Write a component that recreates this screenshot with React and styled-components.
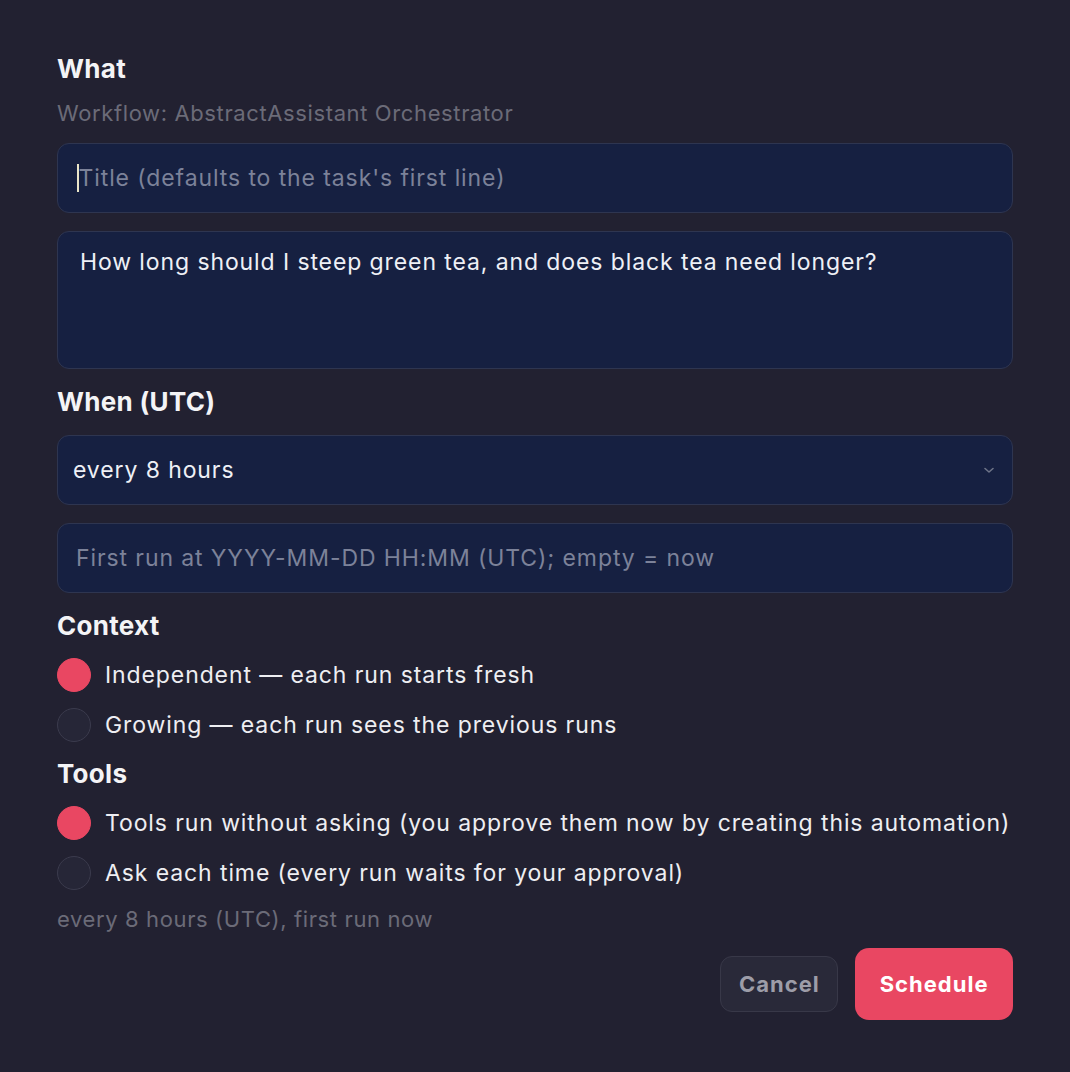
import React from "react";
import styled, { createGlobalStyle } from "styled-components";

const Global = createGlobalStyle`
  html, body { margin: 0; padding: 0; background: #222131; }
  body { font-family: Inter, "Noto Sans", sans-serif; -webkit-font-smoothing: antialiased; }
  * { box-sizing: border-box; }
`;

const Page = styled.div`
  width: 1070px;
  min-height: 1072px;
  background: #222131;
  padding: 52px 57px 0 57px;
  display: flex;
  flex-direction: column;
`;

const Heading = styled.h2`
  margin: ${(p) => p.$mt || 0}px 0 0 0;
  font-size: 26px;
  line-height: 34px;
  font-weight: 700;
  color: #f4f4f6;
  letter-spacing: 0.3px;
`;

const Muted = styled.div`
  margin-top: ${(p) => p.$mt || 0}px;
  font-size: 22px;
  line-height: 28px;
  color: #6b6b78;
  letter-spacing: 0.62px;
`;

const Field = styled.div`
  margin-top: ${(p) => p.$mt || 0}px;
  height: ${(p) => p.$h || 70}px;
  background: #162041;
  border: 1px solid #2e3550;
  border-radius: 12px;
  padding: ${(p) => p.$pad || "0 20px"};
  display: flex;
  align-items: ${(p) => (p.$top ? "flex-start" : "center")};
  font-size: 23px;
  line-height: 30px;
  letter-spacing: 0.9px;
  color: ${(p) => (p.$placeholder ? "#7c8299" : "#eef0f6")};
  position: relative;
`;

const Caret = styled.span`
  display: inline-block;
  width: 1.5px;
  height: 28px;
  background: #e9e4c8;
`;

const Chevron = styled.svg`
  position: absolute;
  right: 16px;
  top: 50%;
  transform: translateY(-50%);
`;

const RadioGroup = styled.div`
  margin-top: ${(p) => p.$mt || 0}px;
  display: flex;
  flex-direction: column;
  gap: 16px;
`;

const RadioRow = styled.label`
  display: flex;
  align-items: center;
  gap: 14px;
  height: 34px;
  font-size: 23px;
  letter-spacing: 0.9px;
  color: #eeeef2;
`;

const Dot = styled.span`
  width: 34px;
  height: 34px;
  border-radius: 50%;
  flex: none;
  background: ${(p) => (p.$on ? "#e94762" : "#262637")};
  border: 1.5px solid ${(p) => (p.$on ? "#e94762" : "#3b3b4d")};
`;

const Footer = styled.div`
  margin-top: 15px;
  display: flex;
  justify-content: flex-end;
  align-items: center;
  gap: 17px;
`;

const CancelBtn = styled.button`
  height: 56px;
  padding: 0 17.5px;
  border-radius: 12px;
  background: #292939;
  border: 1px solid #383848;
  color: #9d9da8;
  font-family: inherit;
  font-size: 22px;
  font-weight: 700;
  letter-spacing: 1px;
`;

const PrimaryBtn = styled.button`
  height: 72px;
  padding: 0 24.5px;
  border-radius: 14px;
  background: #e94762;
  border: none;
  color: #ffffff;
  font-family: inherit;
  font-size: 22px;
  font-weight: 700;
  letter-spacing: 1px;
`;

export default function App() {
  return (
    <>
      <Global />
      <Page>
        <Heading>What</Heading>
        <Muted $mt={13}>Workflow: AbstractAssistant Orchestrator</Muted>
        <Field $mt={16} $placeholder $pad="0 19px">
          <Caret />
          Title (defaults to the task's first line)
        </Field>
        <Field $mt={18} $h={138} $top $pad="15px 22px">
          How long should I steep green tea, and does black tea need longer?
        </Field>
        <Heading $mt={16}>When (UTC)</Heading>
        <Field $mt={16} $pad="0 15px">
          every 8 hours
          <Chevron width="14" height="10" viewBox="0 0 14 10">
            <path d="M3 3.5 L7 7 L11 3.5" fill="none" stroke="#6e7488" strokeWidth="1.6" strokeLinecap="round" strokeLinejoin="round" />
          </Chevron>
        </Field>
        <Field $mt={18} $placeholder $pad="0 18px">
          First run at YYYY-MM-DD HH:MM (UTC); empty = now
        </Field>
        <Heading $mt={16}>Context</Heading>
        <RadioGroup $mt={15}>
          <RadioRow><Dot $on />Independent — each run starts fresh</RadioRow>
          <RadioRow><Dot />Growing — each run sees the previous runs</RadioRow>
        </RadioGroup>
        <Heading $mt={15}>Tools</Heading>
        <RadioGroup $mt={15}>
          <RadioRow><Dot $on />Tools run without asking (you approve them now by creating this automation)</RadioRow>
          <RadioRow><Dot />Ask each time (every run waits for your approval)</RadioRow>
        </RadioGroup>
        <Muted $mt={15}>every 8 hours (UTC), first run now</Muted>
        <Footer>
          <CancelBtn>Cancel</CancelBtn>
          <PrimaryBtn>Schedule</PrimaryBtn>
        </Footer>
      </Page>
    </>
  );
}
